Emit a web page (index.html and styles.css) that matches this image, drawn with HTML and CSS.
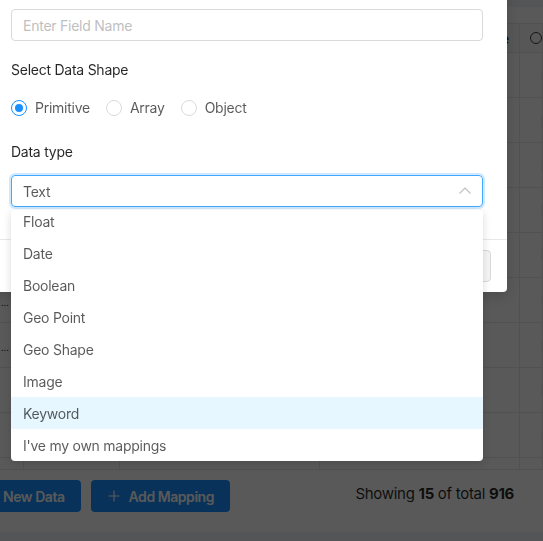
FILE: index.html
```html
<!DOCTYPE html>
<html>
<head>
    <link rel="stylesheet" href="styles.css">
</head>
<body>
    <div class="page">
        <div class="card">
            <div class="table">
                <div class="row head">
                    <div class="cell"></div>
                    <div class="cell"></div>
                    <div class="cell"></div>
                    <div class="cell head-title">Type</div>
                    <div class="cell"><span class="col-icon"></span></div>
                </div>
                <div class="row">
                    <div class="cell"></div><div class="cell"></div><div class="cell"></div><div class="cell"></div>
                    <div class="cell last">Blue</div>
                </div>
                <div class="row">
                    <div class="cell"></div><div class="cell"></div><div class="cell"></div><div class="cell"></div>
                    <div class="cell last">Blue</div>
                </div>
                <div class="row">
                    <div class="cell"></div><div class="cell"></div><div class="cell"></div><div class="cell"></div>
                    <div class="cell last">Red</div>
                </div>
                <div class="row">
                    <div class="cell"></div><div class="cell"></div><div class="cell"></div><div class="cell"></div>
                    <div class="cell last">Blue</div>
                </div>
                <div class="row">
                    <div class="cell"></div><div class="cell"></div><div class="cell"></div><div class="cell"></div>
                    <div class="cell last">Red</div>
                </div>
                <div class="row">
                    <div class="cell more">...</div><div class="cell"></div><div class="cell"></div><div class="cell"></div>
                    <div class="cell last">Blue</div>
                </div>
                <div class="row">
                    <div class="cell more">...</div><div class="cell"></div><div class="cell"></div><div class="cell"></div>
                    <div class="cell last">Blue</div>
                </div>
                <div class="row">
                    <div class="cell"></div><div class="cell"></div><div class="cell"></div><div class="cell"></div>
                    <div class="cell last">Red</div>
                </div>
                <div class="row">
                    <div class="cell"></div><div class="cell"></div><div class="cell"></div><div class="cell"></div>
                    <div class="cell last">Blue</div>
                </div>
                <div class="row short">
                    <div class="cell"></div><div class="cell"></div><div class="cell"></div><div class="cell"></div>
                    <div class="cell"></div>
                </div>
            </div>

            <div class="actions">
                <button class="btn-primary">New Data</button>
                <button class="btn-primary">
                    <svg class="plus-icon" viewBox="0 0 12 12" fill="none" stroke="currentColor">
                        <path d="M6 0.5v11M0.5 6h11" stroke-width="1.2"/>
                    </svg>
                    Add Mapping
                </button>
                <div class="count">Showing <b>15</b> of total <b>916</b></div>
            </div>
        </div>
    </div>

    <div class="overlay"></div>

    <div class="modal">
        <div class="modal-body">
            <input type="text" class="text-input" placeholder="Enter Field Name">

            <div class="form-label">Select Data Shape</div>
            <div class="radio-group">
                <label class="radio checked"><span class="radio-dot"></span><span class="radio-text">Primitive</span></label>
                <label class="radio"><span class="radio-dot"></span><span class="radio-text">Array</span></label>
                <label class="radio"><span class="radio-dot"></span><span class="radio-text">Object</span></label>
            </div>

            <div class="form-label data-type">Data type</div>
            <div class="select-wrap">
                <div class="select">
                    <span>Text</span>
                    <svg class="arrow-icon" viewBox="0 0 12 12" fill="none" stroke="currentColor">
                        <path d="M0.5 8.5L6 3l5.5 5.5" stroke-width="1.1"/>
                    </svg>
                </div>
                <div class="dropdown">
                    <div class="options">
                        <div class="option">Float</div>
                        <div class="option">Date</div>
                        <div class="option">Boolean</div>
                        <div class="option">Geo Point</div>
                        <div class="option">Geo Shape</div>
                        <div class="option">Image</div>
                        <div class="option active">Keyword</div>
                        <div class="option">I've my own mappings</div>
                    </div>
                </div>
            </div>
        </div>
        <div class="modal-footer">
            <button class="btn">Cancel</button>
            <button class="btn" disabled>Add Field</button>
        </div>
    </div>
</body>
</html>
```

FILE: styles.css
```css
* {
    box-sizing: border-box;
}

body {
    margin: 0;
    width: 543px;
    height: 541px;
    overflow: hidden;
    position: relative;
    background: #f0f2f5;
    font-family: Inter, 'Noto Sans', sans-serif;
    font-size: 14px;
    letter-spacing: -0.25px;
    color: rgba(0, 0, 0, 0.65);
}

.page {
    padding-top: 7px;
}

.card {
    background: #fff;
    height: 525px;
    padding-top: 16px;
}

/* table behind the dialog */
.table {
    border-top: 1px solid #e8e8e8;
}

.row {
    display: grid;
    grid-template-columns: 24px 96px 200px 200px 1fr;
    height: 45px;
    border-bottom: 1px solid #e8e8e8;
}

.row.head {
    height: 29px;
    background: #fafafa;
}

.row.short {
    height: 12px;
}

.cell {
    display: flex;
    align-items: center;
    border-right: 1px solid #e8e8e8;
    overflow: hidden;
    white-space: nowrap;
    color: rgba(0, 0, 0, 0.85);
}

.head-title {
    justify-content: flex-end;
    padding-right: 10px;
    font-weight: 500;
}

.col-icon {
    width: 12px;
    height: 12px;
    margin-left: 10px;
    border: 1.5px solid rgba(0, 0, 0, 0.75);
    border-radius: 50%;
}

.cell.last {
    padding-left: 21px;
    font-weight: 600;
}

.cell.more {
    font-size: 9px;
    letter-spacing: 0;
    padding-top: 4px;
    padding-left: 1px;
}

.actions {
    display: flex;
    align-items: center;
    gap: 10px;
    margin-top: 10px;
    margin-left: -14px;
    padding-right: 29px;
}

.btn-primary {
    display: flex;
    align-items: center;
    gap: 9px;
    height: 32px;
    padding: 0 16px 0 17px;
    border: none;
    border-radius: 4px;
    background: #1890ff;
    color: #fff;
    font-family: inherit;
    font-size: 14px;
    font-weight: 600;
    letter-spacing: -0.45px;
}

.plus-icon {
    width: 12px;
    height: 12px;
}

.count {
    margin-left: auto;
    margin-bottom: 6px;
    font-size: 15px;
    letter-spacing: -0.3px;
    color: rgba(0, 0, 0, 0.85);
}

.count b {
    font-weight: 700;
}

.overlay {
    position: fixed;
    top: 0;
    left: 0;
    right: 0;
    bottom: 0;
    background: rgba(0, 0, 0, 0.65);
}

/* dialog */
.modal {
    position: absolute;
    top: -15px;
    left: -13px;
    width: 520px;
    background: #fff;
    border-radius: 4px;
    box-shadow: 0 4px 12px rgba(0, 0, 0, 0.15);
}

.modal-body {
    padding: 24px;
}

.text-input {
    display: block;
    width: 100%;
    height: 32px;
    margin: 0 0 18px 0;
    padding: 4px 11px;
    border: 1px solid #d9d9d9;
    border-radius: 4px;
    font-family: inherit;
    font-size: 14px;
    letter-spacing: -0.25px;
    color: rgba(0, 0, 0, 0.65);
}

.text-input::placeholder {
    color: #bfbfbf;
}

.form-label {
    line-height: 22px;
    color: rgba(0, 0, 0, 0.85);
    margin-bottom: 16px;
}

.form-label.data-type {
    margin-bottom: 12px;
}

.radio-group {
    display: flex;
    line-height: 22px;
    margin-bottom: 22px;
}

.radio {
    display: flex;
    align-items: center;
    margin-right: 8px;
}

.radio-dot {
    position: relative;
    width: 16px;
    height: 16px;
    border: 1px solid #d9d9d9;
    border-radius: 50%;
}

.radio.checked .radio-dot {
    border-color: #1890ff;
}

.radio.checked .radio-dot::after {
    content: '';
    position: absolute;
    top: 3px;
    left: 3px;
    width: 8px;
    height: 8px;
    border-radius: 50%;
    background: #1890ff;
}

.radio-text {
    padding: 0 8px;
}

.select-wrap {
    position: relative;
    margin-bottom: 8px;
}

.select {
    display: flex;
    align-items: center;
    justify-content: space-between;
    height: 32px;
    padding: 0 11px;
    border: 1px solid #40a9ff;
    border-radius: 4px;
    box-shadow: 0 0 0 2px rgba(24, 144, 255, 0.2);
}

.arrow-icon {
    width: 12px;
    height: 12px;
    color: #bfbfbf;
}

.dropdown {
    position: absolute;
    top: 35px;
    left: 0;
    right: 0;
    height: 251px;
    overflow: hidden;
    background: #fff;
    border-radius: 4px;
    box-shadow: 0 2px 8px rgba(0, 0, 0, 0.15);
}

.options {
    margin-top: -5px;
}

.option {
    height: 32px;
    padding: 6px 12px 4px;
    line-height: 22px;
    white-space: nowrap;
}

.option.active {
    background: #e6f7ff;
}

.modal-footer {
    display: flex;
    justify-content: flex-end;
    gap: 8px;
    padding: 10px 16px;
    border-top: 1px solid #e8e8e8;
}

.btn {
    height: 32px;
    padding: 0 15px;
    border: 1px solid #d9d9d9;
    border-radius: 4px;
    background: #fff;
    font-family: inherit;
    font-size: 14px;
    color: rgba(0, 0, 0, 0.65);
}

.btn[disabled] {
    background: #f5f5f5;
    color: rgba(0, 0, 0, 0.25);
}
```
